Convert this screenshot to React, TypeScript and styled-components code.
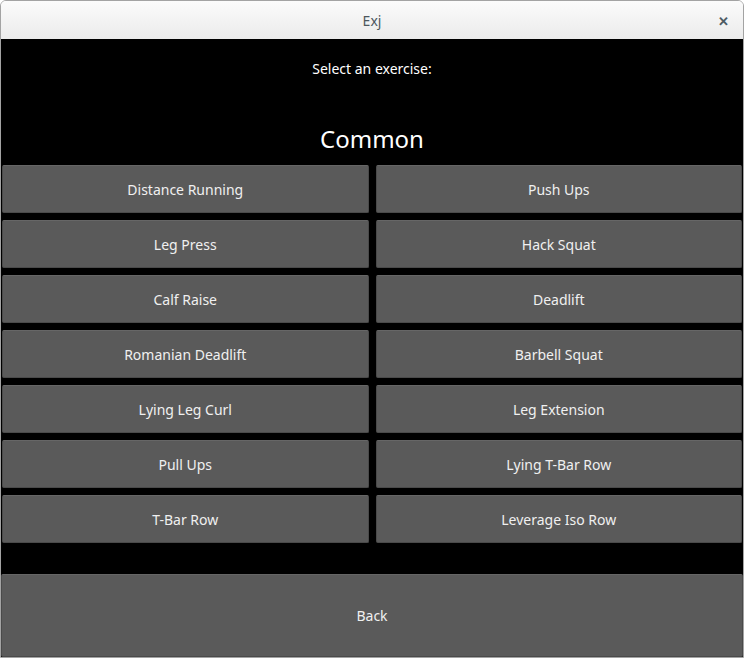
import React from "react";
import styled, { createGlobalStyle } from "styled-components";

const Global = createGlobalStyle`
  html, body { margin: 0; padding: 0; background: #ffffff; }
  * { box-sizing: border-box; }
`;

const Window = styled.div`
  width: 744px;
  height: 658px;
  border: 1px solid #a3a3a3;
  border-radius: 6px 6px 0 0;
  overflow: hidden;
  display: flex;
  flex-direction: column;
  font-family: "Noto Sans", "Open Sans", sans-serif;
`;

const TitleBar = styled.div`
  height: 38px;
  flex: none;
  display: flex;
  align-items: center;
  justify-content: center;
  position: relative;
  background: linear-gradient(#fbfbfb, #ebebeb);
  color: #4d575e;
  font-size: 14px;
`;

const Close = styled.span`
  position: absolute;
  right: 14px;
  top: 11px;
  font-size: 13px;
  font-weight: bold;
  color: #4d5b64;
`;

const Body = styled.div`
  flex: 1;
  background: #000;
  display: flex;
  flex-direction: column;
  color: #fff;
`;

const Prompt = styled.div`
  margin-top: 20px;
  line-height: 20px;
  font-size: 14px;
  text-align: center;
`;

const Heading = styled.div`
  margin-top: 44px;
  line-height: 32px;
  font-size: 24px;
  text-align: center;
`;

const Grid = styled.div`
  margin-top: 10px;
  padding: 0 1px;
  display: grid;
  grid-template-columns: 1fr 1fr;
  grid-auto-rows: 48px;
  gap: 7px;
`;

const Button = styled.button<{ $tall?: boolean }>`
  font-family: inherit;
  font-size: 14px;
  color: #f0f0f0;
  background: #5a5a5a;
  border: 1px solid #4a4a4a;
  border-top-color: #666;
  border-radius: 2px;
  padding: 0;
  margin: 0;
  display: flex;
  align-items: center;
  justify-content: center;
  height: ${(p) => (p.$tall ? "83px" : "100%")};
`;

const Footer = styled.div`
  margin-top: auto;
  display: flex;
  flex-direction: column;
`;

const exercises = [
  "Distance Running",
  "Push Ups",
  "Leg Press",
  "Hack Squat",
  "Calf Raise",
  "Deadlift",
  "Romanian Deadlift",
  "Barbell Squat",
  "Lying Leg Curl",
  "Leg Extension",
  "Pull Ups",
  "Lying T-Bar Row",
  "T-Bar Row",
  "Leverage Iso Row",
];

export default function App() {
  return (
    <>
      <Global />
      <Window>
        <TitleBar>
          Exj
          <Close>✕</Close>
        </TitleBar>
        <Body>
          <Prompt>Select an exercise:</Prompt>
          <Heading>Common</Heading>
          <Grid>
            {exercises.map((e) => (
              <Button key={e}>{e}</Button>
            ))}
          </Grid>
          <Footer>
            <Button $tall>Back</Button>
          </Footer>
        </Body>
      </Window>
    </>
  );
}
